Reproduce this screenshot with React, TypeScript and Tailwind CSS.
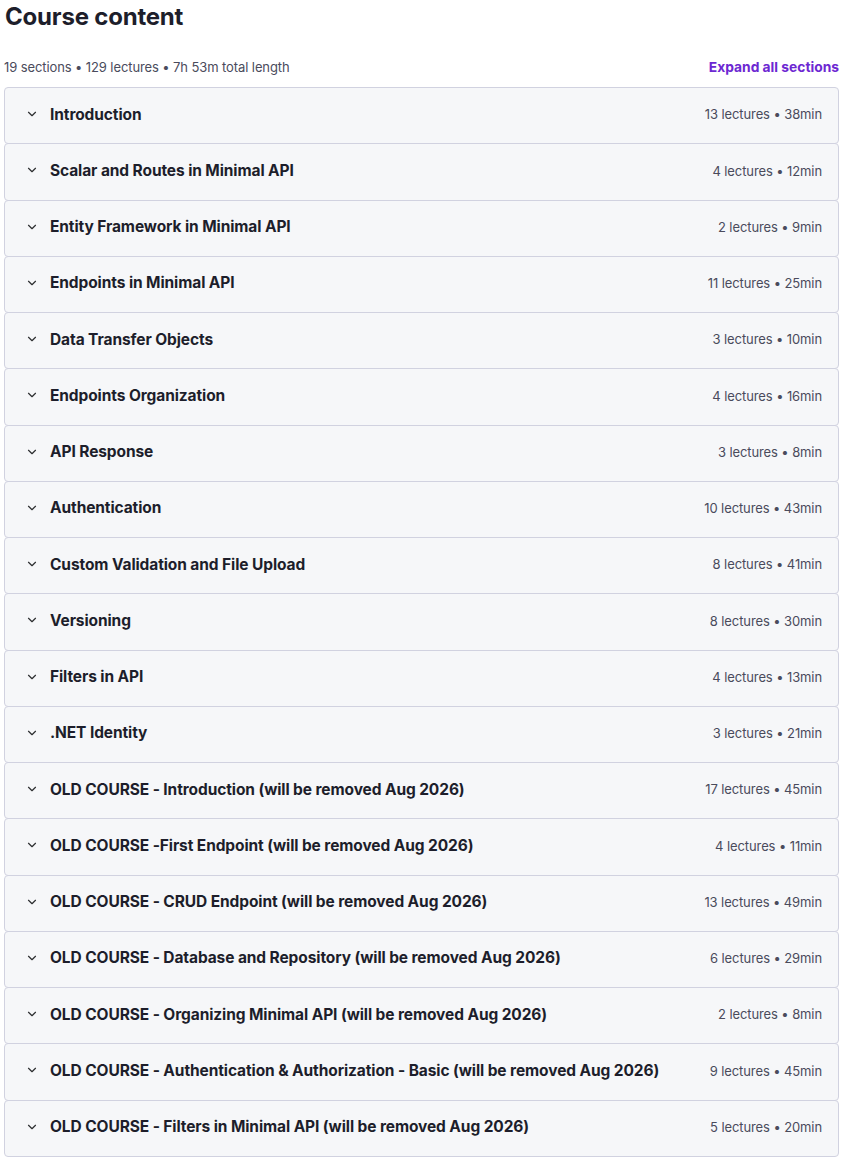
import { ChevronDown } from "lucide-react";

const sections = [
  { title: "Introduction", meta: "13 lectures • 38min" },
  { title: "Scalar and Routes in Minimal API", meta: "4 lectures • 12min" },
  { title: "Entity Framework in Minimal API", meta: "2 lectures • 9min" },
  { title: "Endpoints in Minimal API", meta: "11 lectures • 25min" },
  { title: "Data Transfer Objects", meta: "3 lectures • 10min" },
  { title: "Endpoints Organization", meta: "4 lectures • 16min" },
  { title: "API Response", meta: "3 lectures • 8min" },
  { title: "Authentication", meta: "10 lectures • 43min" },
  { title: "Custom Validation and File Upload", meta: "8 lectures • 41min" },
  { title: "Versioning", meta: "8 lectures • 30min" },
  { title: "Filters in API", meta: "4 lectures • 13min" },
  { title: ".NET Identity", meta: "3 lectures • 21min" },
  { title: "OLD COURSE - Introduction (will be removed Aug 2026)", meta: "17 lectures • 45min" },
  { title: "OLD COURSE -First Endpoint (will be removed Aug 2026)", meta: "4 lectures • 11min" },
  { title: "OLD COURSE - CRUD Endpoint (will be removed Aug 2026)", meta: "13 lectures • 49min" },
  { title: "OLD COURSE - Database and Repository (will be removed Aug 2026)", meta: "6 lectures • 29min" },
  { title: "OLD COURSE - Organizing Minimal API (will be removed Aug 2026)", meta: "2 lectures • 8min" },
  { title: "OLD COURSE - Authentication & Authorization - Basic (will be removed Aug 2026)", meta: "9 lectures • 45min" },
  { title: "OLD COURSE - Filters in Minimal API (will be removed Aug 2026)", meta: "5 lectures • 20min" },
];

export default function App() {
  return (
    <div className="min-h-screen bg-white pl-[4px] pr-[5px] font-['Inter','Liberation_Sans',sans-serif] text-[#2d2f31]">
      <h1 className="pt-[2px] pl-px text-[24px] leading-[30px] font-bold tracking-[-0.2px] text-[#1d1e2b]">
        Course content
      </h1>
      <div className="mt-[26px] mb-[11px] flex items-center justify-between">
        <p className="text-[13px] leading-[18px] tracking-[-0.1px] text-[#4a4b5c]">
          19 sections • 129 lectures • 7h 53m total length
        </p>
        <button
          type="button"
          className="text-[13.8px] leading-[18px] font-bold text-[#6d28d2]"
        >
          Expand all sections
        </button>
      </div>
      <div className="flex flex-col">
        {sections.map((section) => (
          <div
            key={section.title}
            className="-mt-px flex h-[57.25px] items-center justify-between rounded-[4px] border border-[#d1d2e0] bg-[#f6f7f9] pr-[16px] pl-[20px] first:mt-0"
          >
            <div className="flex items-center gap-[11px]">
              <ChevronDown className="mb-[3px] h-[14px] w-[14px] text-[#2d2f31]" strokeWidth={2} />
              <span className="mb-[3px] text-[15.5px] font-bold tracking-[-0.1px] text-[#1d1e2b]">
                {section.title}
              </span>
            </div>
            <span className="mb-px text-[13px] tracking-[-0.1px] text-[#4a4b5c]">
              {section.meta}
            </span>
          </div>
        ))}
      </div>
    </div>
  );
}
